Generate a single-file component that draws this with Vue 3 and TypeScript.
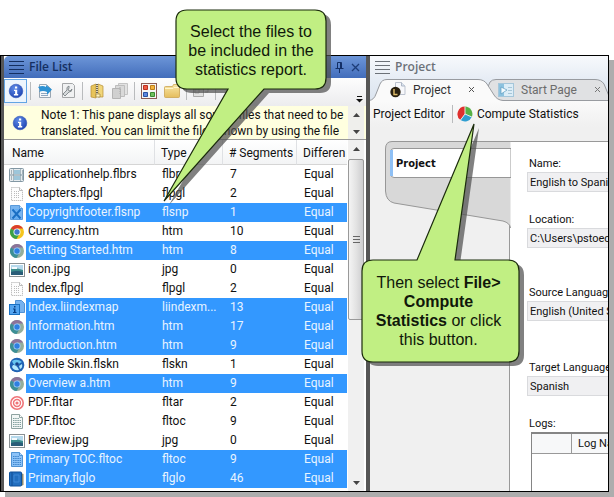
<script setup lang="ts">
import { ref } from 'vue'

interface FileRow {
  name: string
  type: string
  segments: number
  icon: string
  selected?: boolean
}

const files = ref<FileRow[]>([
  { name: 'applicationhelp.flbrs', type: 'flbrs', segments: 7, icon: 'browse' },
  { name: 'Chapters.flpgl', type: 'flpgl', segments: 2, icon: 'page' },
  { name: 'Copyrightfooter.flsnp', type: 'flsnp', segments: 1, icon: 'snippet', selected: true },
  { name: 'Currency.htm', type: 'htm', segments: 10, icon: 'chrome' },
  { name: 'Getting Started.htm', type: 'htm', segments: 8, icon: 'chrome', selected: true },
  { name: 'icon.jpg', type: 'jpg', segments: 0, icon: 'image' },
  { name: 'Index.flpgl', type: 'flpgl', segments: 2, icon: 'page' },
  { name: 'Index.liindexmap', type: 'liindexm...', segments: 13, icon: 'index', selected: true },
  { name: 'Information.htm', type: 'htm', segments: 17, icon: 'chrome', selected: true },
  { name: 'Introduction.htm', type: 'htm', segments: 9, icon: 'chrome', selected: true },
  { name: 'Mobile Skin.flskn', type: 'flskn', segments: 1, icon: 'skin' },
  { name: 'Overview a.htm', type: 'htm', segments: 9, icon: 'chrome', selected: true },
  { name: 'PDF.fltar', type: 'fltar', segments: 2, icon: 'target' },
  { name: 'PDF.fltoc', type: 'fltoc', segments: 9, icon: 'toc' },
  { name: 'Preview.jpg', type: 'jpg', segments: 0, icon: 'image' },
  { name: 'Primary TOC.fltoc', type: 'fltoc', segments: 9, icon: 'toc', selected: true },
  { name: 'Primary.flglo', type: 'flglo', segments: 46, icon: 'glossary', selected: true },
])

const fields = [
  { id: 'name', label: 'Name:', value: 'English to Spanish' },
  { id: 'location', label: 'Location:', value: 'C:\\Users\\pstoecklein' },
  { id: 'source', label: 'Source Language:', value: 'English (United States)' },
  { id: 'target', label: 'Target Language:', value: 'Spanish' },
]

// Icons that have a blue-tinted drawing for selected rows
const tinted = ['chrome', 'toc']

function iconHref(f: FileRow): string {
  return f.selected && tinted.includes(f.icon) ? `#i-${f.icon}-selected` : `#i-${f.icon}`
}
</script>

<template>
  <div class="page">
    <svg class="defs" aria-hidden="true">
      <defs>
        <linearGradient id="folderFill" x1="0" y1="0" x2="0" y2="1">
          <stop offset="0" stop-color="#f9e7a8" />
          <stop offset="1" stop-color="#e5bd5c" />
        </linearGradient>
        <radialGradient id="infoFill" cx=".4" cy=".3" r=".8">
          <stop offset="0" stop-color="#5f8ce8" />
          <stop offset="1" stop-color="#1a3fae" />
        </radialGradient>
      </defs>
      <symbol id="i-info" viewBox="0 0 16 16">
        <circle cx="8" cy="8" r="6.8" fill="url(#infoFill)" stroke="#2b50b4" stroke-width=".6" />
        <path d="M7 3.5h2.2v2H7zM6 6.8h3.2v4.3h1v1.3H5.900v-1.300h1.200v-3h-1.100z" fill="#fff" />
      </symbol>
      <symbol id="i-browse" viewBox="0 0 16 16">
        <rect x=".5" y="1.500" width="14" height="13" rx="1" fill="#e6ecef" stroke="#8297a3" />
        <path d="M4.500 2v12M11.500 2v12" stroke="#a9b8c0" />
        <path d="M5 3h6v4H5zM5 9h6v4H5z" fill="#9dc6da" />
        <path d="M1 8h13" stroke="#7d939f" />
        <path d="M2 4h1M2 6h1M2 10h1M2 12h1M13 4h1M13 6h1M13 10h1M13 12h1" stroke="#627782" />
      </symbol>
      <symbol id="i-page" viewBox="0 0 16 16">
        <path d="M2.500 1.500h8l3 3v10h-11z" fill="#fdfdfd" stroke="#aaa" stroke-dasharray="1 1" />
        <path d="M5 5.500h6M5 7.500h6M5 9.500h6M5 11.500h6" stroke="#bbb" stroke-dasharray="1 1" />
        <path d="M10.500 1.500v3h3" fill="none" stroke="#bbb" />
      </symbol>
      <symbol id="i-snippet" viewBox="0 0 16 16">
        <path d="M1.500.5h9l3 3v11h-12z" fill="#79b5f0" stroke="#5a9adb" />
        <path d="M3.500 4.500l8 9M11.500 4.500l-8 9" stroke="#1a6fc4" stroke-width="2" />
        <path d="M5 4h5l-2.500 3zM5 14h5l-2.500-3z" fill="#64adf3" />
        <path d="M10.500.5v3h3" fill="#d2e7fa" stroke="#5a9adb" />
      </symbol>
      <symbol id="i-chrome" viewBox="0 0 16 16">
        <circle cx="8" cy="8" r="7" fill="#f5c51d" />
        <path d="M8 8L1.900 4.500A7 7 0 0 1 14.100 4.500H8z" fill="#dc3e2d" />
        <path d="M8 8L1.900 4.500A7 7 0 0 0 7.500 15l3.300-5.500z" fill="#39a048" />
        <circle cx="8" cy="8" r="3.500" fill="#fff" />
        <circle cx="8" cy="8" r="2.700" fill="#3e79cc" />
      </symbol>
      <symbol id="i-chrome-selected" viewBox="0 0 16 16">
        <circle cx="8" cy="8" r="7" fill="#94ae9b" />
        <path d="M8 8L1.900 4.500A7 7 0 0 1 14.100 4.500H8z" fill="#8c7399" />
        <path d="M8 8L1.900 4.500A7 7 0 0 0 7.500 15l3.300-5.500z" fill="#3d8f95" />
        <circle cx="8" cy="8" r="3.500" fill="#a5cffb" />
        <circle cx="8" cy="8" r="2.700" fill="#2f7fe0" />
      </symbol>
      <symbol id="i-image" viewBox="0 0 16 16">
        <rect x=".5" y="1.500" width="15" height="13" fill="#fff" stroke="#8a9194" />
        <path d="M2 3h12v10H2z" fill="#b6d9ec" />
        <path d="M2 7q4-2 12 1v5H2z" fill="#3c8d8d" />
        <path d="M2 10q6-2 12 0v3H2z" fill="#2a5d78" />
        <path d="M3 5h5v2H3z" fill="#f5fafd" />
      </symbol>
      <symbol id="i-index" viewBox="0 0 16 16">
        <path d="M6.500.500h6l3 3v9h-9z" fill="#77b2ee" stroke="#4f91d4" />
        <rect x=".5" y="4.500" width="10" height="10" fill="#53a4f0" stroke="#1a71c3" />
        <path d="M5 6h1.500v1.500H5zM4 8.500h2.500V12h1v1H4v-1h1V9.500H4z" fill="#073f86" />
      </symbol>
      <symbol id="i-skin" viewBox="0 0 16 16">
        <circle cx="8" cy="8" r="7.300" fill="#1f62b4" />
        <path d="M3 4q5-3 10 1-3 1-5 4-4-1-5-5z" fill="#67c5ef" />
        <path d="M4 8q4 0 6 5-5 1-7-3zM10 9l3-2q1 4-2 5z" fill="#b4e9fc" />
        <circle cx="8" cy="7" r="1.800" fill="#153f86" />
      </symbol>
      <symbol id="i-target" viewBox="0 0 16 16">
        <circle cx="8" cy="8" r="7" fill="#ef7478" />
        <circle cx="8" cy="8" r="4.800" fill="none" stroke="#fff" stroke-width="1.200" />
        <circle cx="8" cy="8" r="2.200" fill="none" stroke="#fff" stroke-width="1.200" />
      </symbol>
      <symbol id="i-toc" viewBox="0 0 16 16">
        <path d="M2.500.500h8l3 3v11h-11z" fill="#f3f7f6" stroke="#8fa3a1" />
        <path d="M4 4.500h6M4 6.500h8M4 8.500h8M4 10.500h8M4 12.500h8" stroke="#829f9d" stroke-dasharray="1.500 .7" />
        <path d="M10.500.500v3h3" fill="#fff" stroke="#8fa3a1" />
      </symbol>
      <symbol id="i-toc-selected" viewBox="0 0 16 16">
        <path d="M2.500.500h8l3 3v11h-11z" fill="#8cc3f8" stroke="#4f93d3" />
        <path d="M4 4.500h6M4 6.500h8M4 8.500h8M4 10.500h8M4 12.500h8" stroke="#3f86cc" stroke-dasharray="1.500 .7" />
        <path d="M10.500.500v3h3" fill="#b7dafb" stroke="#4f93d3" />
      </symbol>
      <symbol id="i-glossary" viewBox="0 0 16 16">
        <path d="M12 2l2.500 1v11l-2.500 1z" fill="#8b8a70" />
        <rect x=".5" y="1" width="12" height="14" rx="1" fill="#226fbf" stroke="#0e519a" />
        <path d="M3 1v14" stroke="#104f95" />
        <path d="M5 4h5v7H5z" fill="none" stroke="#3c88d6" />
      </symbol>
      <symbol id="i-open" viewBox="0 0 16 16">
        <path d="M2.500 1.500h7l4 4v9h-11z" fill="#f6f8fa" stroke="#9aa6b2" />
        <path d="M4 4.500h4M4 10.500h7M4 12.500h7" stroke="#8fa6bf" />
        <path d="M1 4q5-2 8 0V2l6 4.500-5 5.500V9q-4-2-8 0 2-2-1-5z" fill="#2e92d3" />
      </symbol>
      <symbol id="i-wrench" viewBox="0 0 16 16">
        <path d="M2.500.500h10l2 2v12h-12z" fill="#f0f1f2" stroke="#a4a6a8" />
        <path d="M9 3q-3 1-2 4l-4 4 2 2 4-4q3 0 3-3L10 8 8 7l1-2z" fill="#d6d9db" stroke="#7e8488" stroke-width=".9" />
      </symbol>
      <symbol id="i-zip" viewBox="0 0 16 16">
        <path d="M2 3l5-2v14l-5-1z" fill="#e7c45b" stroke="#b58e33" stroke-width=".7" />
        <path d="M9 1l5 2v11H9z" fill="#f1d67a" stroke="#b58e33" stroke-width=".7" />
        <path d="M8 1v14" stroke="#6b6754" stroke-width="2" stroke-dasharray="1 1" />
        <path d="M7 11h4v3H7z" fill="#fff3bd" stroke="#9b8541" stroke-width=".7" />
      </symbol>
      <symbol id="i-docs" viewBox="0 0 16 16">
        <path d="M6.500.500h9v11h-9z" fill="#e2e2e2" stroke="#c4c4c4" />
        <path d="M3.500 2.500h9v11h-9z" fill="#d9d9d9" stroke="#bdbdbd" />
        <path d="M.5 5.500h8v10h-8z" fill="#d0d0d0" stroke="#b4b4b4" />
        <path d="M8 4v8" stroke="#aaa" stroke-dasharray="1 1" />
      </symbol>
      <symbol id="i-grid" viewBox="0 0 16 16">
        <rect x=".5" y=".5" width="15" height="15" fill="#f7f5f4" stroke="#8b5c54" />
        <path d="M2.500 2.500h4v4h-4z" fill="#eb5b45" stroke="#bd3020" />
        <path d="M9.500 2.500h4v4h-4z" fill="#f5b33b" stroke="#bc7f1c" />
        <path d="M2.500 9.500h4v4h-4z" fill="#5b86de" stroke="#2950a0" />
        <path d="M9.500 9.500h4v4h-4z" fill="#6ec05c" stroke="#3c8a30" />
      </symbol>
      <symbol id="i-folder" viewBox="0 0 16 16">
        <path d="M.5 4.500q0-1 1-1h7l1-2h5q1 0 1 1v11q0 1-1 1h-13q-1 0-1-1z" fill="url(#folderFill)" stroke="#cba452" stroke-width=".8" />
        <path d="M1 5.500h8l1-1h5" fill="none" stroke="#fff5cb" />
      </symbol>
      <symbol id="i-layout" viewBox="0 0 16 16">
        <path d="M.5 3.500h10v10H.5zM2 6h4v4H2z" fill="#e1e1e1" stroke="#aaa" />
        <path d="M12 4h3v5h-3" fill="none" stroke="#aaa" />
      </symbol>
      <symbol id="i-pie" viewBox="0 0 16 16">
        <path d="M8 8V.500a7.500 7.500 0 0 0-4.500 13.500z" fill="#df2f2e" />
        <path d="M8 8V.500a7.500 7.500 0 0 1 6.800 10.500z" fill="#56b145" />
        <path d="M8 8l6.800 3A7.500 7.500 0 0 1 3.500 14z" fill="#2f9ed1" />
        <path d="M8 8V.500M8 8l6.800 3M8 8l-4.500 6" stroke="#f1f1f1" stroke-width=".9" />
      </symbol>
      <symbol id="i-project" viewBox="0 0 16 16">
        <path d="M5.500.500h6l3.500 3.500v8.500h-9.500z" fill="#f7f8fb" stroke="#bcc3cf" />
        <path d="M11.500.500v3.500H15" fill="#dce5f0" stroke="#aeb7c6" />
        <circle cx="5.500" cy="10" r="5.200" fill="#29200f" />
        <path d="M4 7v5.500h3.500" fill="none" stroke="#e0bd6a" stroke-width="1.400" />
      </symbol>
      <symbol id="i-start" viewBox="0 0 16 16">
        <rect x=".5" y="1.500" width="15" height="13" fill="#dcedf7" stroke="#a5c6da" />
        <path d="M1 2h5v12H1z" fill="#8cc2df" />
        <path d="M3 5l6 3-6 4z" fill="#f5fcff" stroke="#5b9bc0" stroke-width=".7" />
        <path d="M10 5.500h4M10 8.500h4M10 11.500h4" stroke="#a7c6d8" />
      </symbol>
    </svg>

    <main class="window">
      <section class="pane files">
        <header class="title active">
          <span class="grip"></span>
          <h1>File List</h1>
          <button class="plain" aria-label="Pin">
            <svg width="9" height="13" viewBox="0 0 9 13"><path d="M2.500 7V1.500h4V7M5.500 1.500V7M.5 7.500h8M4.500 8v4" fill="none" stroke="#132f66" /></svg>
          </button>
          <button class="plain" aria-label="Close">
            <svg width="9" height="9" viewBox="0 0 9 9"><path d="M1 1l7 7M8 1L1 8" stroke="#1d3d78" stroke-width="1.300" /></svg>
          </button>
        </header>

        <div class="toolbar">
          <button class="tool on" aria-label="Show note"><svg><use href="#i-info" /></svg></button>
          <i class="sep"></i>
          <button class="tool" aria-label="Open"><svg><use href="#i-open" /></svg></button>
          <button class="tool" aria-label="Properties"><svg><use href="#i-wrench" /></svg></button>
          <i class="sep"></i>
          <button class="tool" aria-label="Archive"><svg><use href="#i-zip" /></svg></button>
          <button class="tool" aria-label="Copy"><svg><use href="#i-docs" /></svg></button>
          <i class="sep"></i>
          <button class="tool" aria-label="Show tiles"><svg><use href="#i-grid" /></svg></button>
          <button class="tool" aria-label="Show folders"><svg><use href="#i-folder" /></svg></button>
          <i class="sep"></i>
          <button class="tool" aria-label="Layout"><svg><use href="#i-layout" /></svg></button>
          <i class="sep"></i>
          <button class="overflow" aria-label="More buttons">
            <svg width="7" height="7" viewBox="0 0 7 7"><path d="M1 .5h5" stroke="#111" /><path d="M0 3h7L3.500 6.500z" fill="#111" /></svg>
          </button>
        </div>

        <div class="note">
          <svg class="note-icon"><use href="#i-info" /></svg>
          <p>
            <span>Note 1: This pane displays all source files that need to be</span>
            <span>translated. You can limit the files shown by using the file</span>
          </p>
          <div class="note-scroll">
            <button class="arrow" aria-label="Scroll note up"><svg width="7" height="4" viewBox="0 0 7 4"><path d="M0 4h7L3.500 0z" fill="#444" /></svg></button>
            <button class="arrow" aria-label="Scroll note down"><svg width="7" height="4" viewBox="0 0 7 4"><path d="M0 0h7L3.500 4z" fill="#444" /></svg></button>
          </div>
        </div>

        <div class="list">
          <div class="table-clip">
            <table>
              <colgroup>
                <col class="c-icon" /><col /><col class="c-type" /><col class="c-seg" /><col class="c-diff" />
              </colgroup>
              <thead>
                <tr>
                  <th colspan="2" class="first">Name</th>
                  <th>Type</th>
                  <th># Segments</th>
                  <th>Differen</th>
                </tr>
              </thead>
              <tbody>
                <tr v-for="f in files" :key="f.name" :class="{ selected: f.selected }" @click="f.selected = !f.selected">
                  <td class="icon"><svg><use :href="iconHref(f)" /></svg></td>
                  <td class="name">{{ f.name }}</td>
                  <td>{{ f.type }}</td>
                  <td>{{ f.segments }}</td>
                  <td>Equal</td>
                </tr>
              </tbody>
            </table>
          </div>
          <div class="scrollbar">
            <button class="arrow" aria-label="Scroll up"><svg width="7" height="4" viewBox="0 0 7 4"><path d="M0 4h7L3.500 0z" fill="#444" /></svg></button>
            <div class="thumb"><i></i></div>
            <button class="arrow" aria-label="Scroll down"><svg width="7" height="4" viewBox="0 0 7 4"><path d="M0 0h7L3.500 4z" fill="#444" /></svg></button>
          </div>
        </div>
      </section>

      <section class="pane project">
        <header class="title">
          <span class="grip"></span>
          <h2>Project</h2>
        </header>
        <nav class="tabs">
          <svg class="tab-shape" viewBox="0 0 238 23" aria-hidden="true">
            <path d="M112 23L120 4Q122 1.500 126 1.500H225Q231 1.500 234 6L241 23z" fill="#e0e1e3" stroke="#989ba0" />
            <path d="M-1 22.500Q4 22 6 16L10 6Q12 1.500 17 1.500H108Q114 1.500 117 6L124 17Q127 22 133 22.500L134 24H-1z" fill="#fafafa" />
            <path d="M-1 22.500Q4 22 6 16L10 6Q12 1.500 17 1.500H108Q114 1.500 117 6L124 17Q127 22 133 22.500H240" fill="none" stroke="#989ba0" />
          </svg>
          <button class="tab current"><svg class="ico"><use href="#i-project" /></svg><span>Project</span><svg class="x" viewBox="0 0 7 7"><path d="M1 1l5 5M6 1L1 6" stroke="#555" /></svg></button>
          <button class="tab"><svg class="ico"><use href="#i-start" /></svg><span>Start Page</span><svg class="x" viewBox="0 0 7 7"><path d="M1 1l5 5M6 1L1 6" stroke="#777" /></svg></button>
        </nav>
        <div class="actions">
          <button>Project Editor</button>
          <i class="sep"></i>
          <button><svg><use href="#i-pie" /></svg>Compute Statistics</button>
        </div>
        <div class="editor">
          <div class="side">
            <svg class="side-shape" width="126" height="90" viewBox="0 0 126 90" aria-hidden="true">
              <path d="M125.500.500H7Q.5.500.5 8V50Q1 60 9 62L118 80Q125 82 125.500 87" fill="#d8d8d8" stroke="#979797" />
              <path d="M126 7.500H9Q6.500 7.500 5.500 10V33Q6 36.500 9 36.500H126z" fill="#fff" stroke="#979797" />
              <path d="M5 9h3v26H5z" fill="#8fc0f5" />
            </svg>
            <button>Project</button>
          </div>
          <form class="form" @submit.prevent>
            <div v-for="f in fields" :key="f.id" class="field" :class="f.id">
              <label :for="f.id">{{ f.label }}</label>
              <input :id="f.id" type="text" readonly :value="f.value" />
            </div>
            <p class="logs-label">Logs:</p>
            <table class="logs">
              <thead><tr><th></th><th>Log Name</th></tr></thead>
              <tbody><tr><td colspan="2"></td></tr></tbody>
            </table>
          </form>
        </div>
      </section>
    </main>

    <aside class="callout one">
      <svg width="170" height="206" viewBox="0 0 170 206" aria-hidden="true">
        <path class="shade" transform="translate(5 4)" d="M24 1H152Q163 1 163 12V69Q163 80 152 80H101L1 192 65 80H24Q13 80 13 69V12Q13 1 24 1z" />
        <path class="body" d="M24 1H152Q163 1 163 12V69Q163 80 152 80H101L1 192 65 80H24Q13 80 13 69V12Q13 1 24 1z" />
      </svg>
      <p>Select the files to<br />be included in the<br />statistics report.</p>
    </aside>
    <aside class="callout two">
      <svg width="165" height="245" viewBox="0 0 165 245" aria-hidden="true">
        <path class="shade" transform="translate(5 4)" d="M12 137H56L113 1 94 137H147Q158 137 158 148V228Q158 239 147 239H12Q1 239 1 228V148Q1 137 12 137z" />
        <path class="body" d="M12 137H56L113 1 94 137H147Q158 137 158 148V228Q158 239 147 239H12Q1 239 1 228V148Q1 137 12 137z" />
      </svg>
      <p>Then select <b>File&gt;<br />Compute<br />Statistics</b> or click<br />this button.</p>
    </aside>
  </div>
</template>

<style>
body { margin: 0; background: #fff; }
</style>

<style scoped>
.page {
  position: relative;
  display: flex;
  box-sizing: border-box;
  height: 100vh;
  padding: 55px 5px 5px 0;
  overflow: hidden;
  font-family: Roboto, "Open Sans", sans-serif;
  font-size: 12px;
  color: #111;
}
.page * { box-sizing: border-box; }
button { padding: 0; border: 0; background: none; font: inherit; color: inherit; }
h1, h2, p { margin: 0; }
.defs { position: absolute; width: 0; height: 0; }
.window {
  flex: 1;
  min-width: 0;
  display: grid;
  grid-template-columns: minmax(0, 362fr) minmax(0, 238fr);
  column-gap: 4px;
  padding-left: 3px;
  border: 1px solid #000;
  background: #565656;
  box-shadow: 5px 5px 0 #adadad;
}
.pane { display: flex; flex-direction: column; min-height: 0; overflow: hidden; }
.files { background: #fff; }
.title { flex: none; display: flex; align-items: center; height: 22px; padding: 0 6px 0 5px; color: #6c7178; }
.title.active {
  border-radius: 5px 0 0 0;
  background: linear-gradient(#6d96d8, #426dbb);
  color: #142f61;
}
.title h1, .title h2 { flex: 1; margin-left: 5px; font-family: "Open Sans", sans-serif; font-size: 12px; font-weight: 600; line-height: 20px; }
.title .plain { display: flex; margin-left: 7px; }
.grip {
  width: 15px;
  height: 13px;
  background: repeating-linear-gradient(currentColor 0 1px, transparent 1px 4px);
}

.toolbar {
  flex: none;
  display: flex;
  align-items: center;
  height: 28px;
  padding-bottom: 3px;
  background: linear-gradient(#fdfdfd, #ececee);
}
.tool { flex: none; display: flex; align-items: center; justify-content: center; width: 23px; height: 24px; }
.tool svg, .note-icon, .icon svg { width: 16px; height: 16px; }
.tool.on { border: 1px solid #62a5e4; background: #edf5fd; }
.sep { flex: none; width: 1px; height: 18px; margin: 0 2px 0 3px; background: #b9bbbd; }
.overflow { display: flex; align-self: flex-end; margin: 0 3px 0 auto; }

.note { flex: none; display: flex; align-items: center; height: 34px; padding-left: 8px; border-bottom: 1px solid #999; background: #ffffdf; }
.note p { flex: 1; min-width: 0; margin-left: 13px; line-height: 16px; white-space: nowrap; overflow: hidden; }
.note span { display: block; }
.note-scroll { display: flex; flex-direction: column; align-self: stretch; width: 16px; margin-right: 2px; background: #efefec; }
.arrow { flex: none; display: flex; align-items: center; justify-content: center; width: 100%; height: 17px; }

.list { flex: 1; display: flex; min-height: 0; }
.table-clip { flex: 1; min-width: 0; overflow: hidden; }
table { border-collapse: separate; border-spacing: 0; }
.table-clip table { width: 100%; table-layout: fixed; }
.c-icon { width: 22px; }
.c-type { width: 68px; }
.c-seg { width: 74px; }
.c-diff { width: 50px; }
.table-clip th {
  height: 25px;
  padding: 2px 0 0 6px;
  border-right: 1px solid #dfe1e4;
  border-bottom: 1px solid #d5d5d5;
  background: linear-gradient(#fff, #f3f4f5);
  font-weight: 400;
  text-align: left;
  white-space: nowrap;
}
.table-clip th:last-child { border-right: 0; }
.table-clip th.first { padding-left: 8px; }
.table-clip td { height: 19px; padding: 0 0 0 7px; line-height: 19px; white-space: nowrap; }
.table-clip td.icon { padding: 0 0 0 5px; }
.table-clip td.name { padding-left: 2px; }
.icon svg { display: block; }
.selected td { background: #3398ff; color: #e8f4ff; }
.selected td.icon { background: #fff; }

.scrollbar { display: flex; flex-direction: column; width: 16px; margin: 0 2px 0 1px; background: #f0f0f0; }
.thumb {
  flex: 0 1 161px;
  display: flex;
  align-items: center;
  justify-content: center;
  margin: 2px 0 auto;
  border: 1px solid #999;
  border-radius: 2px;
  background: linear-gradient(90deg, #f4f4f4, #e3e3e3 50%, #cdcdcf);
}
.thumb i { width: 7px; height: 7px; background: repeating-linear-gradient(#666 0 1px, transparent 1px 3px); }

.project { background: #f0f0f0; }
.project .title { background: linear-gradient(#f7f9fc, #e7edf5); }
.tabs { position: relative; flex: none; display: flex; height: 23px; background: linear-gradient(#e7edf5, #dbe4ef); }
.tab-shape { position: absolute; left: 0; top: 0; width: 238px; height: 23px; }
.tab { position: relative; flex: none; display: flex; align-items: center; color: #6c6c6c; padding-left: 20px; }
.tab.current { width: 108px; color: #333; }
.tab .ico { width: 16px; height: 16px; margin-right: 7px; }
.tab:not(.current) { flex: 1; }
.tab .x { width: 7px; height: 7px; margin-left: 17px; }
.actions { flex: none; display: flex; align-items: center; height: 26px; padding-left: 3px; background: linear-gradient(#fafafa, #f0f0f0); white-space: nowrap; }
.actions button { display: flex; align-items: center; gap: 4px; }
.actions svg { width: 16px; height: 16px; }
.actions .sep { margin: 0 4px 0 7px; }

.editor { flex: 1; display: grid; grid-template-columns: 140px minmax(0, 1fr); margin-top: 14px; min-height: 0; font-size: 11px; }
.side { position: relative; padding: 9px 0 0 26px; border-right: 1px solid #999; }
.side-shape { position: absolute; left: 15px; top: 0; }
.side button { position: relative; display: block; height: 27px; font-family: "DejaVu Sans Condensed", "DejaVu Sans", sans-serif; font-size: 11px; font-weight: 700; }
.form { padding: 13px 0 0 17px; border-top: 1px solid #999; background: #fff; overflow: hidden; }
.field { margin-bottom: 19px; }
.field.location { margin-bottom: 36px; }
.field.source { margin-bottom: 38px; }
.field label, .logs-label { display: block; height: 17px; padding-left: 2px; line-height: 17px; white-space: nowrap; }
.field input {
  display: block;
  width: 180px;
  height: 20px;
  padding: 0 2px;
  border: 1px solid #d9dadd;
  background: #f0f0f2;
  font: inherit;
  color: #111;
}
.logs { width: 180px; margin: 0 0 0 4px; border: solid #858585; border-width: 2px 0 0 1px; }
.logs th { height: 20px; padding: 0 0 0 6px; border-right: 1px solid #999; border-bottom: 1px solid #999; background: #f7f8f9; font-weight: 400; text-align: left; }
.logs th:first-child { width: 40px; }
.logs td { height: 60px; }

.callout { position: absolute; }
.callout svg { display: block; }
.callout .body { fill: #c1ef83; stroke: #1b2b0c; stroke-width: 1.200; }
.callout .shade { fill: #505050; fill-opacity: .72; }
.callout p { position: absolute; font-family: "Liberation Sans", sans-serif; font-size: 16px; line-height: 19px; text-align: center; white-space: nowrap; color: #10180a; }
.one { left: 163px; top: 9px; }
.one p { left: 13px; top: 13px; width: 150px; }
.two { left: 361px; top: 123px; }
.two p { left: 0; top: 150px; width: 155px; }
</style>
